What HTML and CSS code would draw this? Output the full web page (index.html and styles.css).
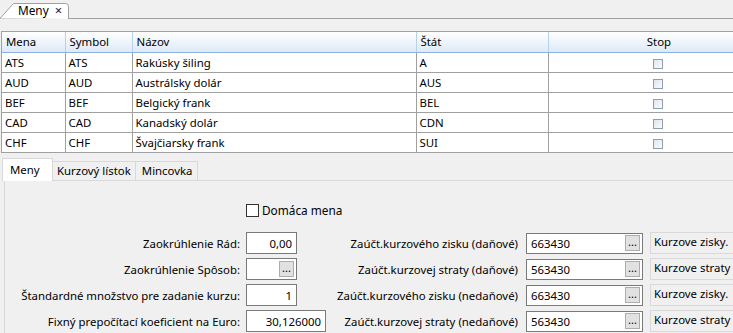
FILE: index.html
```html
<!DOCTYPE html>
<html lang="sk">
<head>
<meta charset="utf-8">
<title>Meny</title>
<link rel="stylesheet" href="styles.css">
</head>
<body>
<div class="app">
  <div class="doc-strip">
    <div class="doc-tab">
      <svg class="doc-tab-shape" width="71" height="17" viewBox="0 0 71 17">
        <path d="M0 16.5 L13.5 1.5 L65.5 1.5 Q68.5 1.5 68.5 4.5 L68.5 17" fill="#fff" stroke="#a0a0a0"/>
      </svg>
      <span class="doc-tab-label">Meny</span>
      <span class="doc-tab-close">×</span>
    </div>
  </div>

  <div class="content">
    <div class="grid">
      <table class="grid-table">
        <colgroup>
          <col class="c-mena"><col class="c-symbol"><col class="c-nazov"><col class="c-stat"><col class="c-stop">
        </colgroup>
        <thead>
          <tr><th>Mena</th><th>Symbol</th><th>Názov</th><th>Štát</th><th class="center">Stop</th></tr>
        </thead>
        <tbody>
          <tr><td>ATS</td><td>ATS</td><td>Rakúsky šiling</td><td>A</td><td class="center"><span class="grid-check"></span></td></tr>
          <tr><td>AUD</td><td>AUD</td><td>Austrálsky dolár</td><td>AUS</td><td class="center"><span class="grid-check"></span></td></tr>
          <tr><td>BEF</td><td>BEF</td><td>Belgický frank</td><td>BEL</td><td class="center"><span class="grid-check"></span></td></tr>
          <tr><td>CAD</td><td>CAD</td><td>Kanadský dolár</td><td>CDN</td><td class="center"><span class="grid-check"></span></td></tr>
          <tr><td>CHF</td><td>CHF</td><td>Švajčiarsky frank</td><td>SUI</td><td class="center"><span class="grid-check"></span></td></tr>
        </tbody>
      </table>
    </div>

    <div class="lower">
      <div class="tabs">
        <div class="tab active">Meny</div>
        <div class="tab">Kurzový lístok</div>
        <div class="tab last">Mincovka</div>
      </div>
      <div class="panel">
        <div class="form">
          <label class="home-check"><span class="box"></span>Domáca mena</label>

          <div class="lbl left">Zaokrúhlenie Rád:</div>
          <div class="cell in"><div class="field num short">0,00</div></div>
          <div class="lbl right">Zaúčt.kurzového zisku (daňové)</div>
          <div class="cell acct"><div class="field acct-f"><span>663430</span><span class="dots">...</span></div></div>
          <div class="cell disp"><div class="display">Kurzove zisky.</div></div>

          <div class="lbl left">Zaokrúhlenie Spôsob:</div>
          <div class="cell in"><div class="field short"><span></span><span class="dots">...</span></div></div>
          <div class="lbl right">Zaúčt.kurzovej straty (daňové)</div>
          <div class="cell acct"><div class="field acct-f"><span>563430</span><span class="dots">...</span></div></div>
          <div class="cell disp"><div class="display">Kurzove straty</div></div>

          <div class="lbl left">Štandardné množstvo pre zadanie kurzu:</div>
          <div class="cell in"><div class="field num short">1</div></div>
          <div class="lbl right">Zaúčt.kurzového zisku (nedaňové)</div>
          <div class="cell acct"><div class="field acct-f"><span>663430</span><span class="dots">...</span></div></div>
          <div class="cell disp"><div class="display">Kurzove zisky.</div></div>

          <div class="lbl left">Fixný prepočítací koeficient na Euro:</div>
          <div class="cell in"><div class="field num wide">30,126000</div></div>
          <div class="lbl right">Zaúčt.kurzovej straty (nedaňové)</div>
          <div class="cell acct"><div class="field acct-f"><span>563430</span><span class="dots">...</span></div></div>
          <div class="cell disp"><div class="display">Kurzove straty</div></div>
        </div>
      </div>
    </div>
  </div>
</div>
</body>
</html>
```

FILE: styles.css
```css
* { box-sizing: border-box; }

html, body {
  margin: 0;
  padding: 0;
}

body {
  width: 733px;
  height: 333px;
  overflow: hidden;
  background: #f0f0f0;
  font-family: "Noto Sans", "Liberation Sans", sans-serif;
  font-size: 11.4px;
  color: #000;
}

.app {
  width: 733px;
  height: 333px;
  overflow: hidden;
}

/* document tab strip */
.doc-strip {
  height: 19px;
  border-bottom: 1px solid #a0a0a0;
  display: flex;
  align-items: flex-end;
  background: #f0f0f0;
}

.doc-tab {
  position: relative;
  width: 71px;
  height: 17px;
  margin-bottom: -1px;
  display: flex;
  align-items: center;
  padding-left: 18px;
  line-height: 15px;
  font-size: 12px;
}

.doc-tab-shape {
  position: absolute;
  left: 0;
  top: 0;
}

.doc-tab-label,
.doc-tab-close {
  position: relative;
}

.doc-tab-label {
  font-size: 11.8px;
}

.doc-tab-close {
  margin-left: 6px;
  font-size: 13px;
  color: #222;
}

.content {
  padding-top: 12px;
}

/* grid */
.grid {
  margin-left: 1px;
  width: 770px;
  height: 122px;
  border: 1px solid #a0a0a0;
  background: #fff;
  overflow: hidden;
}

.grid-table {
  border-collapse: collapse;
  table-layout: fixed;
  width: 768px;
}

.c-mena { width: 63px; }
.c-symbol { width: 67px; }
.c-nazov { width: 284px; }
.c-stat { width: 132px; }
.c-stop { width: 222px; }

.grid-table th {
  height: 20px;
  padding: 0 0 0 4px;
  text-align: left;
  font-weight: normal;
  background: linear-gradient(#ffffff, #dde9f7);
  border-bottom: 1px solid #8db2dd;
  border-right: 1px solid #b7d0ec;
}

.grid-table td {
  height: 20px;
  padding: 0 0 0 3px;
  border-bottom: 1px solid #a0a0a0;
  border-right: 1px solid #a0a0a0;
  white-space: nowrap;
}

.grid-table .center {
  text-align: center;
  padding-left: 0;
}

.grid-check {
  display: inline-block;
  width: 10px;
  height: 10px;
  margin-right: 3px;
  border: 1px solid #8e9fb5;
  background: linear-gradient(135deg, #dfe5ee, #fbfcfd);
  vertical-align: middle;
  position: relative;
  top: 1px;
}

/* lower tabs */
.lower {
  padding-top: 5px;
}

.tabs {
  display: flex;
  align-items: flex-end;
  padding-left: 2px;
  height: 22px;
}

.tab {
  height: 19px;
  padding: 0 4px;
  border: 1px solid #d9d9d9;
  border-bottom: none;
  border-left: none;
  background: #f0f0f0;
  line-height: 18px;
}

.tab.last {
  padding: 0 4px 0 6px;
}

.tab.active {
  height: 23px;
  margin-bottom: -1px;
  width: 51px;
  padding-left: 7px;
  border-left: 1px solid #d9d9d9;
  background: #fff;
  line-height: 21px;
  position: relative;
}

.panel {
  margin-left: 4px;
  height: 160px;
  border-top: 1px solid #d9d9d9;
  border-left: 1px solid #d9d9d9;
  background: #f0f0f0;
}

.form {
  display: grid;
  grid-template-columns: 241px 85px 195px 124px 1fr;
  grid-template-rows: 29px;
  grid-auto-rows: 22px;
  row-gap: 4px;
  padding-top: 18px;
  align-items: center;
}

.home-check {
  grid-column: 1 / -1;
  grid-row: 1;
  align-self: start;
  display: flex;
  align-items: center;
  height: 22px;
  padding-left: 241px;
  font-size: 11.8px;
}

.home-check .box {
  width: 13px;
  height: 13px;
  border: 1px solid #333;
  background: #fff;
  margin-right: 3px;
}

.lbl {
  text-align: right;
  white-space: nowrap;
}

.lbl.left { grid-column: 1; padding-right: 6px; }
.lbl.right { grid-column: 3; padding-right: 8px; }
.cell.in { grid-column: 2; }
.cell.acct { grid-column: 4; }
.cell.disp { grid-column: 5; }

.cell {
  display: flex;
  align-items: center;
  height: 22px;
}

.field {
  height: 22px;
  border: 1px solid #7a7a7a;
  background: #fff;
  display: flex;
  align-items: center;
  justify-content: space-between;
  padding: 0 2px 0 4px;
}

.field.num {
  justify-content: flex-end;
  padding-right: 4px;
}

.field.short { width: 51px; }
.field.wide { width: 80px; }
.field.acct-f { width: 117px; height: 21px; }

.dots {
  width: 15px;
  height: 16px;
  border: 1px solid #adadad;
  background: #e1e1e1;
  font-size: 11px;
  line-height: 12px;
  text-align: center;
}

.display {
  width: 100px;
  height: 22px;
  border: 1px solid #d9d9d9;
  background: #f0f0f0;
  padding-left: 3px;
  line-height: 18px;
  white-space: nowrap;
}
```
